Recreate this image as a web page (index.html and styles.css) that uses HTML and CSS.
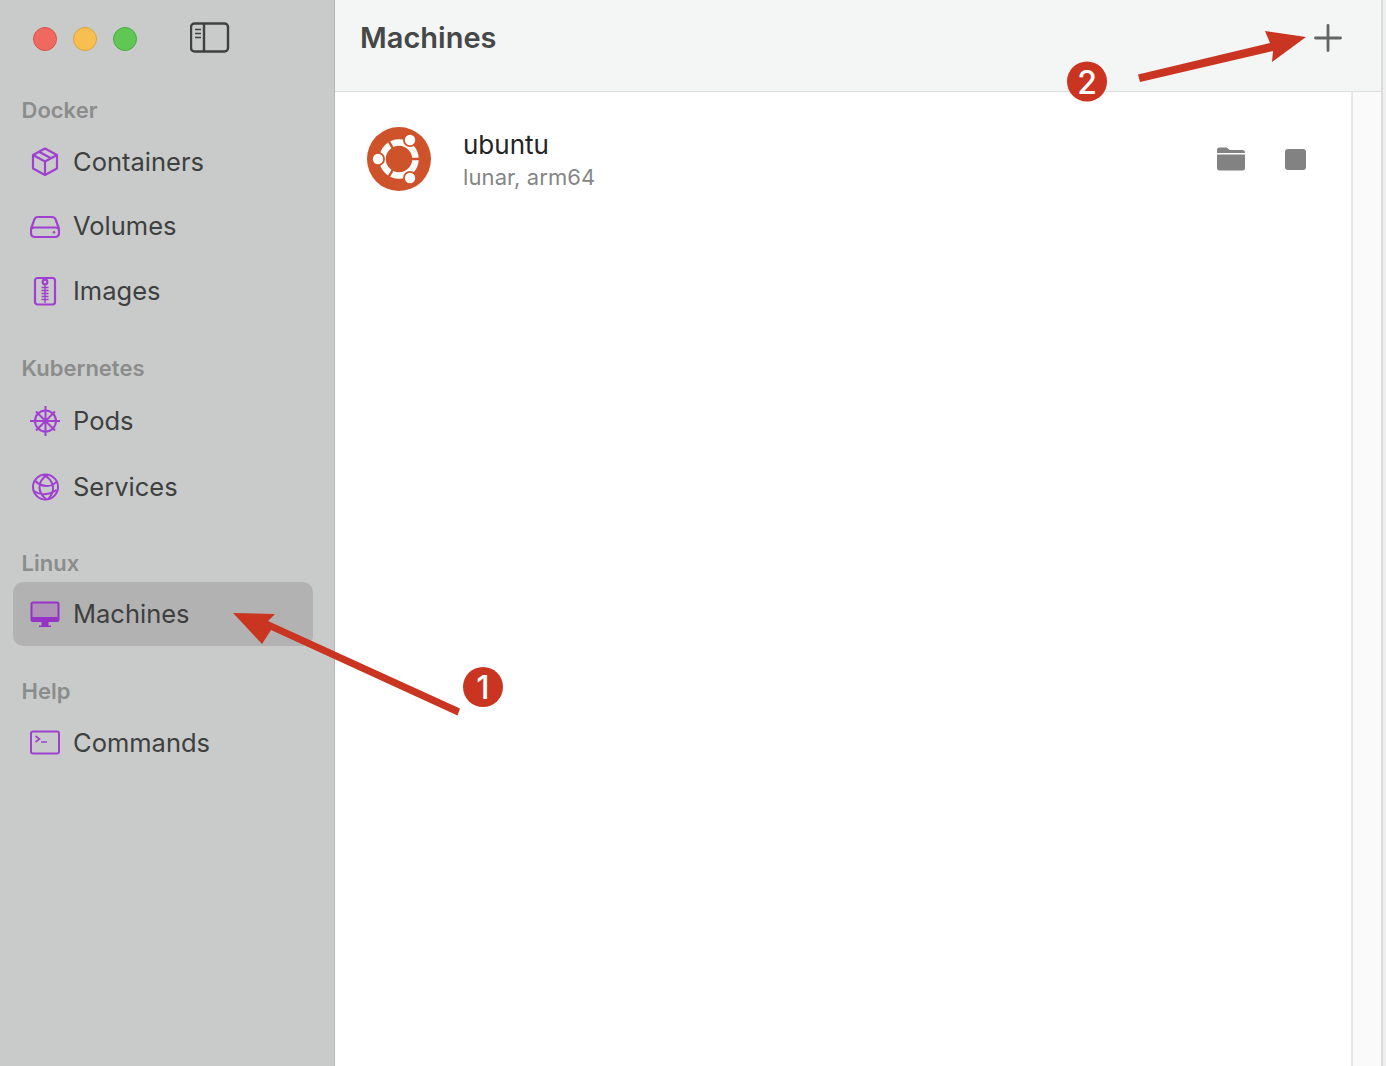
FILE: index.html
```html
<!DOCTYPE html>
<html lang="en">
<head>
<meta charset="utf-8">
<title>Machines</title>
<link rel="stylesheet" href="styles.css">
</head>
<body>
<div class="app">
  <aside class="sidebar">
    <div class="titlebar">
      <div class="lights">
        <span class="light red"></span>
        <span class="light yellow"></span>
        <span class="light green"></span>
      </div>
      <svg class="toggle" width="40" height="32" viewBox="0 0 40 32" fill="none" stroke="#3f4141" stroke-width="2.4">
        <rect x="1" y="1.5" width="37" height="28" rx="3.5"/>
        <path d="M14 1.5v28"/>
        <path d="M5 7.500h6M5 11.500h6M5 15.500h6" stroke-width="1.6"/>
      </svg>
    </div>
    <section class="group group-docker">
      <h2 class="group-title">Docker</h2>
      <a class="row"><svg class="icon" viewBox="0 0 30 30" fill="none" stroke="#a040d0" stroke-width="2.200" stroke-linejoin="round"><path d="M15 1.500l12 6.500v13.500l-12 6.500-12-6.500V8z"/><path d="M3 8l12 6.500L27 8M15 14.500V28M9 4.700l12 6.500"/></svg><span>Containers</span></a>
      <a class="row"><svg class="icon" viewBox="0 0 30 30" fill="none" stroke="#a040d0" stroke-width="2.200" stroke-linejoin="round"><path d="M7.500 5h15c1.500 0 2.400.7 3 2.200L28.700 16c.2.600.3 1 .3 1.700V21c0 2.400-1.600 4-4 4H5c-2.400 0-4-1.600-4-4v-3.300c0-.7.100-1.100.3-1.700L4.500 7.200C5.100 5.700 6 5 7.500 5z"/><path d="M1.500 16.500c1-.7 2-1 3.500-1h20c1.500 0 2.500.3 3.500 1"/><circle cx="24" cy="20.300" r="1.300" fill="#a040d0" stroke="none"/></svg><span>Volumes</span></a>
      <a class="row"><svg class="icon" viewBox="0 0 30 30" fill="none" stroke="#a040d0" stroke-width="2.200" stroke-linejoin="round"><rect x="5" y="2" width="20" height="26.500" rx="2.500"/><circle cx="15" cy="6" r="2.300"/><path d="M15 1v3M15 8.500V27M11.500 11.500h7M11.500 14.500h7M11.500 17.500h7M11.500 20.500h7M11.500 23.500h7" stroke-width="1.400"/></svg><span>Images</span></a>
    </section>
    <section class="group group-k8s">
      <h2 class="group-title">Kubernetes</h2>
      <a class="row"><svg class="icon" viewBox="0 0 30 30" fill="none" stroke="#a040d0" stroke-width="2"><circle cx="15.500" cy="15" r="10.500"/><path d="M15.500 0v30M0 15h30.500M6 5.500l19 19M25 5.500L6 24.500"/><circle cx="15.500" cy="15" r="2.400" fill="#a040d0" stroke="none"/></svg><span>Pods</span></a>
      <a class="row"><svg class="icon" viewBox="0 0 30 30" fill="none" stroke="#a040d0" stroke-width="2"><circle cx="15.500" cy="15" r="12.500"/><path d="M18 2.800c-5 2.500-8.500 7-8.500 12.500s2.500 9 7 12.200M13 2.700c5.500 2 9.500 7 10 12.500s-2 9-5 12M5 8.500c3 3.500 7 5.500 12 5.500s7-1.500 9-4M3.500 19c4 2.500 9 3.500 13 3s7.500-2 10-4"/></svg><span>Services</span></a>
    </section>
    <section class="group group-linux">
      <h2 class="group-title">Linux</h2>
      <a class="row selected"><svg class="icon" viewBox="0 0 30 30"><path d="M3 2.500h24a2.500 2.500 0 0 1 2.500 2.500v15.500a2.500 2.500 0 0 1-2.500 2.500H3a2.500 2.500 0 0 1-2.500-2.500V5A2.500 2.500 0 0 1 3 2.500z" fill="#9533c5"/><rect x="2.500" y="4.500" width="25" height="13.500" fill="#ad93b6"/><path d="M11.500 23h7v3.500h2.500v1.500H9v-1.500h2.500z" fill="#9533c5"/></svg><span>Machines</span></a>
    </section>
    <section class="group">
      <h2 class="group-title">Help</h2>
      <a class="row"><svg class="icon" viewBox="0 0 30 30" fill="none" stroke="#a040d0" stroke-width="2"><rect x="1" y="3.500" width="28" height="22" rx="2"/><path d="M5.500 8l4 3-4 3M11 14h6" stroke-width="1.600"/></svg><span>Commands</span></a>
    </section>
  </aside>
  <main class="main">
    <header class="header">
      <h1 class="title">Machines</h1>
      <svg class="plus" width="28" height="28" viewBox="0 0 28 28" stroke="#636565" stroke-width="2.800" stroke-linecap="round"><path d="M14 1.500v25M1.500 14h25"/></svg>
    </header>
    <div class="body">
      <div class="list">
        <div class="machine">
          <svg class="logo" width="64" height="64" viewBox="0 0 64 64">
            <circle cx="32" cy="32" r="32" fill="#cf532a"/>
            <circle cx="32" cy="32" r="16.500" fill="none" stroke="#fff" stroke-width="6.500"/>
            <path d="M32 32H56M32 32L20 11.200M32 32L20 52.800" stroke="#cf532a" stroke-width="2.400"/>
            <circle cx="11" cy="32" r="7" fill="#cf532a"/>
            <circle cx="43" cy="13" r="7" fill="#cf532a"/>
            <circle cx="43" cy="51" r="7" fill="#cf532a"/>
            <circle cx="11" cy="32" r="5.200" fill="#fff"/>
            <circle cx="43" cy="13" r="5.200" fill="#fff"/>
            <circle cx="43" cy="51" r="5.200" fill="#fff"/>
          </svg>
          <div class="meta">
            <div class="name">ubuntu</div>
            <div class="sub">lunar, arm64</div>
          </div>
          <div class="actions">
            <svg width="30" height="24" viewBox="0 0 30 24"><path d="M1 5.500V3a2.500 2.500 0 0 1 2.500-2.500h6c1.500 0 2 .5 3 1.500l1 1h13A2.500 2.500 0 0 1 29 5.500v.5H1z" fill="#828282"/><path d="M1 7.500h28V21a2.500 2.500 0 0 1-2.500 2.500h-23A2.500 2.500 0 0 1 1 21z" fill="#828282"/></svg>
            <span class="stop"></span>
          </div>
        </div>
      </div>
      <div class="gutter"></div>
    </div>
  </main>
  <div class="edge"></div>
</div>
<svg class="notes" width="1386" height="1066" viewBox="0 0 1386 1066">
  <g fill="#ca3521">
    <path d="M460 708.500L457.500 715.500 271 630 262 644 233 613 275 614 268 621z"/>
    <path d="M1138 74.500L1140 82 1273 51 1272 62 1306 37 1265 31 1270 43z"/>
    <circle cx="483" cy="687" r="20"/>
    <circle cx="1087" cy="81.500" r="20"/>
  </g>
  <text class="badge" x="483" y="699">1</text>
  <text class="badge" x="1087" y="93.500">2</text>
</svg>
</body>
</html>
```

FILE: styles.css
```css
* { box-sizing: border-box; }
html, body { margin: 0; height: 100%; overflow: hidden; }
body { font-family: Inter, "Liberation Sans", sans-serif; background: #fff; position: relative; }
.app { display: flex; height: 1066px; width: 1386px; }

.sidebar {
  width: 335px;
  flex: none;
  background: #c9cbca;
  border-right: 1px solid #b4b5b5;
  padding: 0 21px 0 13px;
}
.titlebar { display: flex; align-items: center; height: 78px; padding-left: 20px; }
.lights { display: flex; gap: 16px; }
.light { width: 24px; height: 24px; border-radius: 50%; border: 1px solid; }
.red { background: #f0695e; border-color: #d8534a; }
.yellow { background: #f6bf4f; border-color: #dba43c; }
.green { background: #60c654; border-color: #4bad42; }
.toggle { margin-left: 53px; margin-top: -2px; }

.group { margin-top: 25px; }
.group-docker { margin-top: 12px; }
.group-k8s { margin-top: 24.5px; }
.group-k8s .row { height: 66px; }
.group-linux { margin-top: 23px; }
.group-linux .group-title { height: 39px; }
.group-title {
  margin: 0 0 0 8.500px;
  height: 40px;
  display: flex;
  align-items: center;
  font-size: 22px;
  font-weight: 600;
  color: #8b8d8c;
}
.row {
  display: flex;
  align-items: center;
  height: 64.5px;
  padding-left: 17px;
  gap: 13px;
  font-size: 25.500px;
  color: #3e3f3f;
  border-radius: 10px;
}
.row span { padding-bottom: 2px; }
.group-linux .row { height: 64px; }
.selected { background: #b2b2b2; }
.icon { width: 30px; height: 30px; flex: none; }

.main { width: 1046px; flex: none; display: flex; flex-direction: column; }
.header {
  height: 92px;
  flex: none;
  background: #f4f6f5;
  border-bottom: 1px solid #dcdddc;
  display: flex;
  align-items: center;
  justify-content: space-between;
  padding: 0 39px 16px 25px;
}
.title { margin: 0; font-size: 29px; font-weight: 600; color: #464747; }
.body { flex: 1; display: flex; min-height: 0; }
.list { flex: 1; background: #fff; padding: 34px 45px 0 32px; }
.gutter { width: 30px; flex: none; background: #fafafa; border-left: 2px solid #e6e6e6; }
.machine { display: flex; align-items: center; }
.logo { flex: none; }
.meta { margin-left: 32px; margin-top: 2px; flex: 1; }
.name { font-size: 26px; line-height: 34px; color: #232424; }
.sub { font-size: 22px; line-height: 30px; letter-spacing: .1px; color: #858686; }
.actions { display: flex; align-items: center; gap: 39px; }
.stop { width: 21px; height: 21px; border-radius: 3px; background: #828282; }
.edge { width: 5px; flex: none; background: #efefef; border-left: 2px solid #dcdcdc; }

.notes { position: absolute; left: 0; top: 0; pointer-events: none; }
.badge { font-family: Inter, "Liberation Sans", sans-serif; font-size: 32px; font-weight: 500; fill: #fff; text-anchor: middle; }
```
